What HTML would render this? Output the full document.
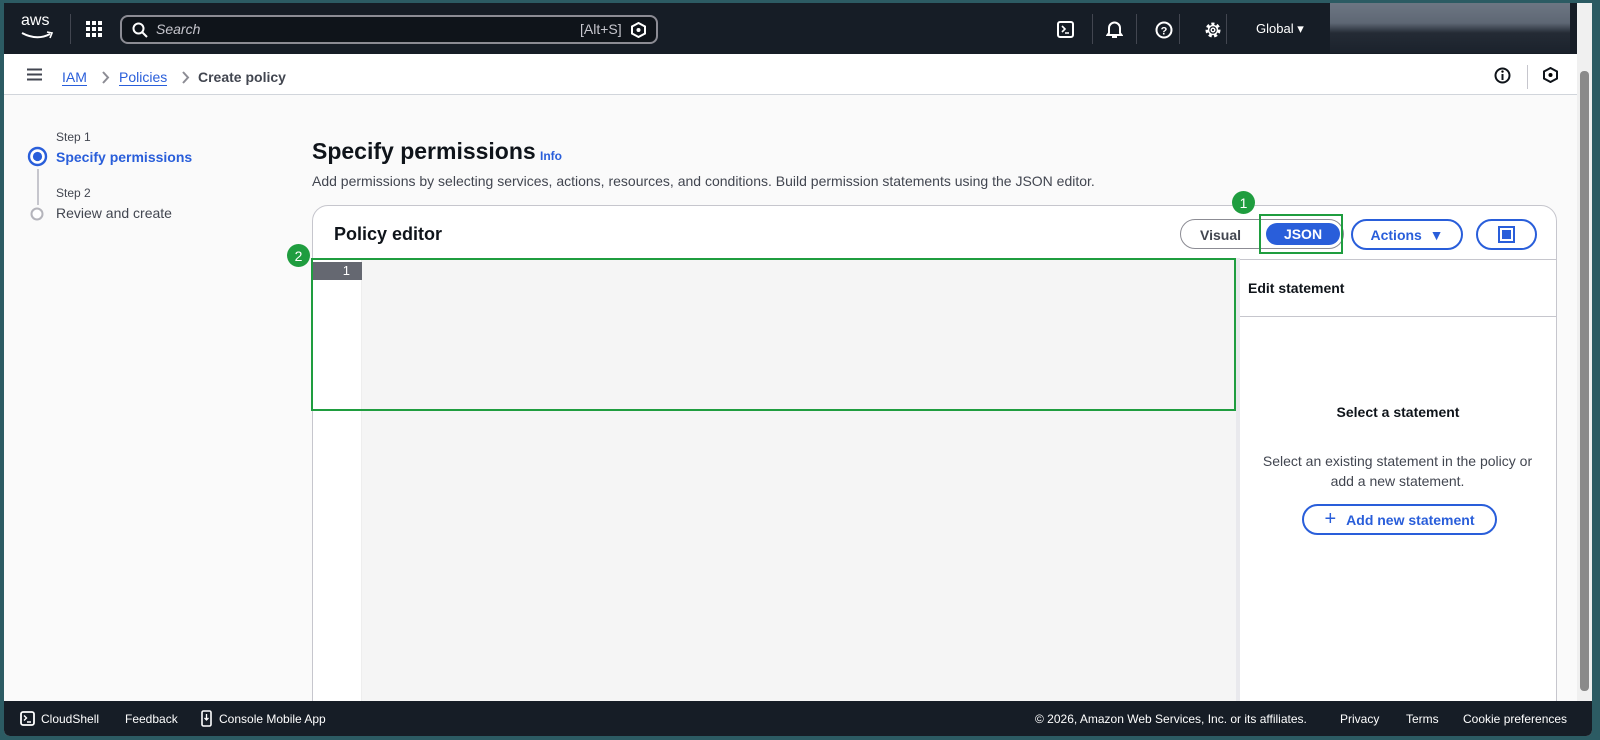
<!DOCTYPE html>
<html><head><meta charset="utf-8"><style>
*{box-sizing:border-box;margin:0;padding:0}
body{width:1600px;height:740px;background:#2c5b63;font-family:"Liberation Sans",sans-serif;position:relative;overflow:hidden;color:#0f141a}
.a{position:absolute}
.win{left:4px;top:3px;width:1588px;height:733px;background:#fafafa;border-radius:0 0 6px 6px;overflow:hidden}
.nav{left:0;top:0;width:1588px;height:51px;background:#161d26}
.t{position:absolute;white-space:nowrap}
.blue{color:#295eda}
.btn{position:absolute;border:2px solid #295eda;border-radius:20px;color:#295eda;font-weight:bold;font-size:14px;display:flex;align-items:center;justify-content:center;background:#fff}
.badge{position:absolute;width:23px;height:23px;border-radius:50%;background:#1f9d3f;color:#fff;font-size:14px;display:flex;align-items:center;justify-content:center}
.sep{position:absolute;width:1px;height:30px;background:#424650;top:11px}
</style></head><body>
<div class="a win">
 <div class="a nav">
  <div class="t" style="left:17px;top:9px;color:#fff;font-size:16px">aws</div>
  <svg class="a" style="left:16px;top:28px" width="34" height="10"><path d="M2 2 Q17 10 30 3" stroke="#fff" stroke-width="2" fill="none"/><path d="M27 1 L32 2 L30 7" stroke="#fff" stroke-width="1.6" fill="none"/></svg>
  <div class="sep" style="left:66px"></div>
  <svg class="a" style="left:82px;top:18px" width="18" height="18" fill="#fff"><rect x="0" y="0" width="4" height="4"/><rect x="6" y="0" width="4" height="4"/><rect x="12" y="0" width="4" height="4"/><rect x="0" y="6" width="4" height="4"/><rect x="6" y="6" width="4" height="4"/><rect x="12" y="6" width="4" height="4"/><rect x="0" y="12" width="4" height="4"/><rect x="6" y="12" width="4" height="4"/><rect x="12" y="12" width="4" height="4"/></svg>
  <div class="a" style="left:116px;top:12px;width:538px;height:29px;border:2px solid #8c8c94;border-radius:8px;background:#0f141a"></div>
  <svg class="a" style="left:128px;top:19px" width="16" height="16"><circle cx="6.5" cy="6.5" r="5" stroke="#fff" stroke-width="2" fill="none"/><path d="M10 10 L15 15" stroke="#fff" stroke-width="2"/></svg>
  <div class="t" style="left:152px;top:18px;color:#c6c6cd;font-style:italic;font-size:14px">Search</div>
  <div class="t" style="left:576px;top:18px;color:#c6c6cd;font-size:14px">[Alt+S]</div>
  <svg class="a" style="left:627px;top:19px" width="15" height="16"><path d="M7.5 1 L14 4.5 V11.5 L7.5 15 L1 11.5 V4.5Z" stroke="#fff" stroke-width="2" fill="none"/><circle cx="7.5" cy="8" r="2" fill="#fff"/></svg>
  <svg class="a" style="left:1053px;top:18px" width="17" height="17"><rect x="1" y="1" width="15" height="15" rx="2" stroke="#fff" stroke-width="2" fill="none"/><path d="M5 5 L8 8 L5 11 M8 12 H12" stroke="#fff" stroke-width="1.6" fill="none"/></svg>
  <div class="sep" style="left:1088px"></div>
  <svg class="a" style="left:1102px;top:17px" width="17" height="19"><path d="M3 13 V8 A5.5 5.5 0 0 1 14 8 V13 L15.5 15 H1.5Z" stroke="#fff" stroke-width="2" fill="none"/><path d="M6 17 H11" stroke="#fff" stroke-width="2"/></svg>
  <div class="sep" style="left:1132px"></div>
  <svg class="a" style="left:1151px;top:18px" width="18" height="18"><circle cx="9" cy="9" r="7.5" stroke="#fff" stroke-width="2" fill="none"/><text x="9" y="13.5" font-size="11" font-weight="bold" fill="#fff" text-anchor="middle" font-family="Liberation Sans">?</text></svg>
  <div class="sep" style="left:1175px"></div>
  <svg class="a" style="left:1200px;top:18px" width="18" height="18"><circle cx="9" cy="9" r="6" stroke="#fff" stroke-width="3" fill="none" stroke-dasharray="3 2.3"/><circle cx="9" cy="9" r="4.5" stroke="#fff" stroke-width="1.5" fill="none"/><circle cx="9" cy="9" r="1.8" stroke="#fff" stroke-width="1.4" fill="none"/></svg>
  <div class="sep" style="left:1222px"></div>
  <div class="t" style="left:1252px;top:18px;color:#fff;font-size:13px">Global ▾</div>
  <div class="a" style="left:1326px;top:0;width:240px;height:50px;background:linear-gradient(#6d7683 0,#5e6774 40%,#242b35 60%,#1b222c)"></div>
 </div>
 <div class="a" style="left:0;top:51px;width:1588px;height:41px;background:#fff;border-bottom:1px solid #d1d5db"></div>
 <svg class="a" style="left:23px;top:65px" width="15" height="13"><path d="M0 1.5H15M0 6.5H15M0 11.5H15" stroke="#424650" stroke-width="2"/></svg>
 <div class="t blue" style="left:58px;top:66px;font-size:14px;border-bottom:1px solid #295eda">IAM</div>
 <svg class="a" style="left:97px;top:68px" width="9" height="13"><path d="M2 1 L7 6.5 L2 12" stroke="#8c8c94" stroke-width="2" fill="none"/></svg>
 <div class="t blue" style="left:115px;top:66px;font-size:14px;border-bottom:1px solid #295eda">Policies</div>
 <svg class="a" style="left:177px;top:68px" width="9" height="13"><path d="M2 1 L7 6.5 L2 12" stroke="#8c8c94" stroke-width="2" fill="none"/></svg>
 <div class="t" style="left:194px;top:66px;font-size:14px;font-weight:bold;color:#424650">Create policy</div>
 <svg class="a" style="left:1490px;top:64px" width="17" height="17"><circle cx="8.5" cy="8.5" r="7" stroke="#0f141a" stroke-width="2" fill="none"/><path d="M8.5 7V13" stroke="#0f141a" stroke-width="2"/><circle cx="8.5" cy="4.6" r="1.2"/></svg>
 <div class="a" style="left:1523px;top:62px;width:1px;height:24px;background:#c6c6cd"></div>
 <svg class="a" style="left:1539px;top:64px" width="15" height="16"><path d="M7.5 1 L14 4.5 V11.5 L7.5 15 L1 11.5 V4.5Z" stroke="#0f141a" stroke-width="2" fill="none"/><circle cx="7.5" cy="8" r="2"/></svg>

 <div class="t" style="left:52px;top:127px;font-size:12px;color:#424650">Step 1</div>
 <svg class="a" style="left:23px;top:143px" width="21" height="21"><circle cx="10.5" cy="10.5" r="8.5" stroke="#295eda" stroke-width="2.4" fill="#fff"/><circle cx="10.5" cy="10.5" r="4.6" fill="#295eda"/></svg>
 <div class="t" style="left:52px;top:146px;font-size:14px;font-weight:bold;color:#295eda">Specify permissions</div>
 <div class="a" style="left:33px;top:166px;width:2px;height:36px;background:#c6c6cd"></div>
 <div class="t" style="left:52px;top:183px;font-size:12px;color:#424650">Step 2</div>
 <svg class="a" style="left:26px;top:204px" width="14" height="14"><circle cx="7" cy="7" r="5.5" stroke="#b4b4bb" stroke-width="2" fill="#fff"/></svg>
 <div class="t" style="left:52px;top:202px;font-size:14px;color:#424650">Review and create</div>

 <div class="t" style="left:308px;top:135px;font-size:23px;font-weight:bold">Specify permissions</div>
 <div class="t blue" style="left:536px;top:146px;font-size:12px;font-weight:bold">Info</div>
 <div class="t" style="left:308px;top:170px;font-size:14px;color:#424650">Add permissions by selecting services, actions, resources, and conditions. Build permission statements using the JSON editor.</div>

 <div class="a" style="left:308px;top:202px;width:1245px;height:560px;background:#fff;border:1px solid #c6c6cd;border-radius:16px"></div>
 <div class="t" style="left:330px;top:221px;font-size:18px;font-weight:bold">Policy editor</div>
 <div class="a" style="left:1176px;top:216px;width:164px;height:30px;border:1px solid #8c8c94;border-radius:16px;background:#fff"></div>
 <div class="t" style="left:1196px;top:224px;font-size:14px;font-weight:bold;color:#424650">Visual</div>
 <div class="a" style="left:1262px;top:220px;width:74px;height:22px;background:#295eda;border-radius:12px;color:#fff;font-weight:bold;font-size:14px;text-align:center;line-height:22px">JSON</div>
 <div class="a" style="left:1255px;top:211px;width:84px;height:40px;border:2px solid #1f9d3f"></div>
 <div class="badge" style="left:1228px;top:188px">1</div>
 <div class="btn" style="left:1347px;top:216px;width:112px;height:31px">Actions&nbsp;&nbsp;▼</div>
 <div class="btn" style="left:1472px;top:216px;width:61px;height:31px"><span style="width:17px;height:17px;border:2px solid #295eda;display:flex;align-items:center;justify-content:center"><span style="width:9px;height:9px;background:#295eda"></span></span></div>

 <div class="a" style="left:309px;top:255px;width:923px;height:480px;background:#f5f5f5;border-top:1px solid #c6c6cd"></div>
 <div class="a" style="left:309px;top:256px;width:49px;height:480px;background:#fff;border-right:1px solid #eee"></div>
 <div class="a" style="left:309px;top:259px;width:49px;height:18px;background:#656871;color:#fff;font-size:13px;text-align:right;padding-right:12px;line-height:18px">1</div>
 <div class="a" style="left:1232px;top:255px;width:4px;height:480px;background:#e9e9ed"></div>
 <div class="a" style="left:1236px;top:256px;width:316px;height:480px;background:#fff;border-top:1px solid #c6c6cd"></div>
 <div class="a" style="left:307px;top:255px;width:925px;height:153px;border:2px solid #1f9d3f"></div>
 <div class="badge" style="left:283px;top:241px">2</div>
 <div class="t" style="left:1244px;top:277px;font-size:14px;font-weight:bold">Edit statement</div>
 <div class="a" style="left:1236px;top:313px;width:316px;height:1px;background:#c6c6cd"></div>
 <div class="t" style="left:1236px;top:401px;width:316px;text-align:center;font-size:14px;font-weight:bold">Select a statement</div>
 <div class="t" style="left:1252px;top:448px;width:283px;text-align:center;font-size:14px;color:#424650;line-height:20px;white-space:normal">Select an existing statement in the policy or add a new statement.</div>
 <div class="btn" style="left:1298px;top:501px;width:195px;height:31px"><span style="font-size:20px;font-weight:normal;margin-right:10px">+</span>Add new statement</div>

 <div class="a" style="left:0;top:698px;width:1588px;height:35px;background:#161d26;color:#fff;font-size:12px">
  <svg class="a" style="left:16px;top:10px" width="15" height="15"><rect x="1" y="1" width="13" height="13" rx="2" stroke="#fff" stroke-width="1.8" fill="none"/><path d="M4 4.5 L6.5 7 L4 9.5 M7 11 H11" stroke="#fff" stroke-width="1.4" fill="none"/></svg>
  <div class="t" style="left:37px;top:11px">CloudShell</div>
  <div class="t" style="left:121px;top:11px">Feedback</div>
  <svg class="a" style="left:197px;top:9px" width="12" height="17"><rect x="1" y="1" width="9" height="15" rx="1.5" stroke="#fff" stroke-width="1.6" fill="none"/><path d="M5.5 4 V10 M3.5 8 L5.5 10 L7.5 8" stroke="#fff" stroke-width="1.3" fill="none"/></svg>
  <div class="t" style="left:215px;top:11px">Console Mobile App</div>
  <div class="t" style="left:1031px;top:11px">© 2026, Amazon Web Services, Inc. or its affiliates.</div>
  <div class="t" style="left:1336px;top:11px">Privacy</div>
  <div class="t" style="left:1402px;top:11px">Terms</div>
  <div class="t" style="left:1459px;top:11px">Cookie preferences</div>
 </div>
 <div class="a" style="left:1573px;top:51px;width:15px;height:647px;background:#f0f0f0"></div>
 <div class="a" style="left:1576px;top:68px;width:9px;height:620px;background:#8a8a8a;border-radius:4px"></div>
</div>
<div class="a" style="left:1577px;top:3px;width:15px;height:51px;background:#f0f0f0"></div>
</body></html>
